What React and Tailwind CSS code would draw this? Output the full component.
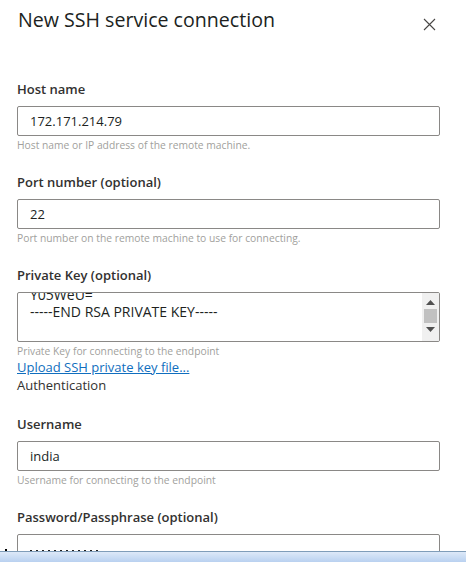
const font = { fontFamily: '"Open Sans", "Noto Sans", sans-serif' };

const Label = ({ children }) => (
  <div className="h-5 text-[13px] leading-5 font-semibold text-[#323130]">{children}</div>
);

const Help = ({ children }) => (
  <div className="mt-[2px] text-[10.3px] leading-[14px] text-[#a19f9d]">{children}</div>
);

const TextBox = ({ value, dots }) => (
  <div className="mt-[7px] h-[30px] w-[423px] border border-[#8a8886] rounded-[2px] px-[12px] text-[13px] leading-[28px] text-[#201f1e]">
    {dots ? (
      <div className="pt-[15px] flex gap-[4px]">
        {Array.from({ length: 12 }).map((_, i) => (
          <span key={i} className="w-[2px] h-[2px] bg-[#201f1e]" />
        ))}
      </div>
    ) : (
      value
    )}
  </div>
);

const CloseIcon = () => (
  <svg width="13" height="13" viewBox="0 0 13 13" className="text-[#484644]">
    <path d="M1 1 L12 12 M12 1 L1 12" stroke="currentColor" strokeWidth="1.1" />
  </svg>
);

const KeyArea = () => (
  <div className="mt-[7px] h-[50px] w-[423px] border border-[#8a8886] rounded-[2px] flex overflow-hidden">
    <div className="flex-1 overflow-hidden px-[12px] text-[14px] leading-[17px] text-[#201f1e]">
      <div className="-mt-[7px]">Y05WeU=</div>
      <div>-----END RSA PRIVATE KEY-----</div>
    </div>
    <div className="w-[17px] bg-[#f0f0f0] flex flex-col items-center">
      <svg width="9" height="5" viewBox="0 0 9 5" className="mt-[7px]">
        <path d="M0 5 L4.5 0 L9 5 Z" fill="#505050" />
      </svg>
      <div className="mt-[4px] w-[13px] h-[14px] bg-[#c1c1c1]" />
      <svg width="9" height="5" viewBox="0 0 9 5" className="mt-[4px]">
        <path d="M0 0 L4.5 5 L9 0 Z" fill="#505050" />
      </svg>
    </div>
  </div>
);

export default function App() {
  return (
    <div className="relative w-[466px] h-[562px] overflow-hidden bg-white" style={font}>
      <div className="pl-[17px]">
        <div className="mt-[6px] flex items-center justify-between pr-[30px]">
          <div className="pl-[1px] text-[19.6px] leading-[28px] text-[#201f1e]">New SSH service connection</div>
          <div className="mt-[8px]">
            <CloseIcon />
          </div>
        </div>

        <div className="mt-[45px]">
          <Label>Host name</Label>
          <TextBox value="172.171.214.79" />
          <Help>Host name or IP address of the remote machine.</Help>
        </div>

        <div className="mt-[20px]">
          <Label>Port number (optional)</Label>
          <TextBox value="22" />
          <Help>Port number on the remote machine to use for connecting.</Help>
        </div>

        <div className="mt-[20px]">
          <Label>Private Key (optional)</Label>
          <KeyArea />
          <Help>Private Key for connecting to the endpoint</Help>
          <a href="#" className="block text-[13px] leading-[18px] text-[#106ebe] underline">
            Upload SSH private key file...
          </a>
          <div className="text-[13px] leading-[18px] text-[#323130]">Authentication</div>
        </div>

        <div className="mt-[20px]">
          <Label>Username</Label>
          <TextBox value="india" />
          <Help>Username for connecting to the endpoint</Help>
        </div>

        <div className="mt-[20px]">
          <Label>Password/Passphrase (optional)</Label>
          <TextBox dots />
        </div>
      </div>

      <div className="absolute left-[5px] top-[549px] w-[2px] h-[2px] bg-black" />
      <div className="absolute left-0 right-0 bottom-0 h-[11px] border-t border-[#7f9db9] bg-gradient-to-b from-[#dde9f8] to-[#b9d1f0]" />
    </div>
  );
}
